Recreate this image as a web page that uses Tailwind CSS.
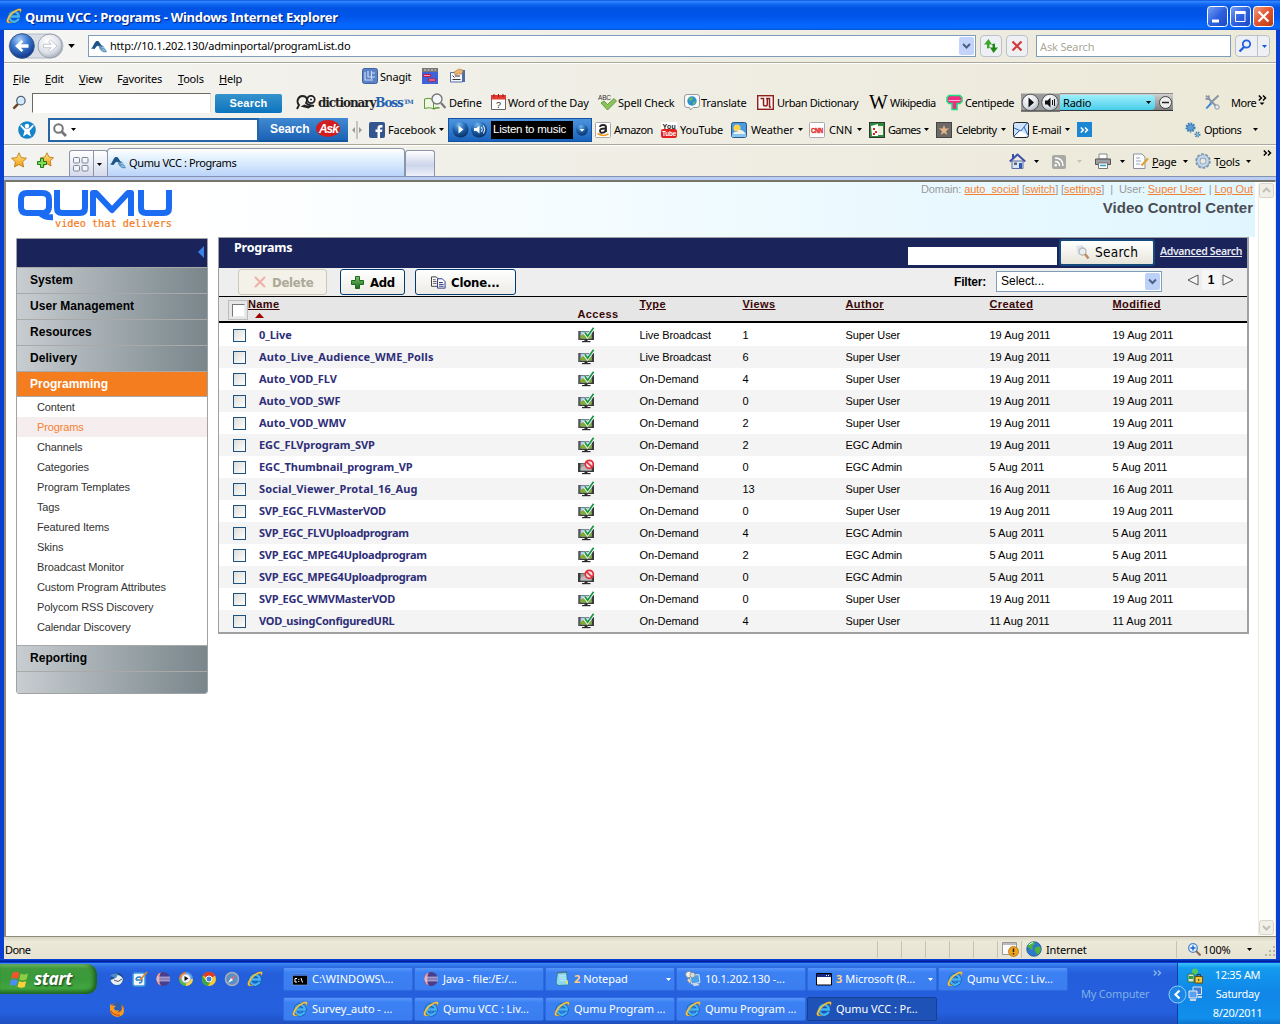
<!DOCTYPE html>
<html lang="en">
<head>
<meta charset="utf-8">
<title>Qumu VCC : Programs</title>
<script src="https://cdn.jsdelivr.net/npm/@tailwindcss/browser@4"></script>
</head>
<body class="h-[1024px] w-[1280px] overflow-hidden bg-[#245edb] font-['Noto_Sans',sans-serif] text-[11px] leading-none tracking-[-0.2px] text-black">
<svg class="absolute size-0" xmlns="http://www.w3.org/2000/svg">
  <defs>
    <radialGradient id="gBlue" cx=".4" cy=".25" r=".8"><stop offset="0" stop-color="#a9cdf7"/><stop offset=".45" stop-color="#3a78cf"/><stop offset="1" stop-color="#0b2d80"/></radialGradient>
    <radialGradient id="gGrey" cx=".4" cy=".3" r=".8"><stop offset="0" stop-color="#fff"/><stop offset=".6" stop-color="#dde1e8"/><stop offset="1" stop-color="#98a0ae"/></radialGradient>
    <radialGradient id="gOrb" cx=".4" cy=".2" r=".9"><stop offset="0" stop-color="#6fb4ee"/><stop offset=".5" stop-color="#1b5ea9"/><stop offset="1" stop-color="#07264f"/></radialGradient>
    <linearGradient id="gGreen" x1="0" y1="0" x2="0" y2="1"><stop offset="0" stop-color="#7cc36c"/><stop offset="1" stop-color="#1a6b1a"/></linearGradient>
    <linearGradient id="gStar" x1="0" y1="0" x2="0" y2="1"><stop offset="0" stop-color="#ffe98a"/><stop offset="1" stop-color="#f29a0c"/></linearGradient>
    <linearGradient id="gMin" x1="0" y1="0" x2="1" y2="1"><stop offset="0" stop-color="#7ba2f4"/><stop offset=".5" stop-color="#2f62e0"/><stop offset="1" stop-color="#1a47c4"/></linearGradient>
    <linearGradient id="gClose" x1="0" y1="0" x2="1" y2="1"><stop offset="0" stop-color="#f2a080"/><stop offset=".5" stop-color="#e2532f"/><stop offset="1" stop-color="#b83a12"/></linearGradient>
  </defs>
  <symbol id="ie" viewBox="0 0 16 16"><path d="M12.600 10.600A4.800 4.900 0 1 1 12.900 8.500H4.500" fill="none" stroke="#0f5cae" stroke-width="3.600"/><path d="M12.600 10.600A4.800 4.900 0 1 1 12.900 8.500H4.500" fill="none" stroke="#45b4f6" stroke-width="2.300"/><path d="M15 1.200C13.300.1 9.800 1.400 6.300 4.200 2.200 7.600-.2 12 1.100 14.200c.9 1.200 3 .9 5-.2-1.700.3-3 .2-3.400-.8-.6-1.700 1.200-4.900 4.500-7.700C10.200 2.900 13 1.800 13.900 2.800c.5.500.3 1.400-.1 2.300 1.300-1.600 2-3.200 1.200-3.900z" fill="#fbd04a" stroke="#c98710" stroke-width=".4"/></symbol>
  <symbol id="mount" viewBox="0 0 16 16"><path d="M0 10.500C2 10 3 5 5 3.500c2-1.500 3.500.5 5 3.500 1.500 0 3 1.500 3.500 3 1 1 1.500 2 2.500 4-2 .6-4.700.3-6-1.500-1.500-1-2-3-2.500-4.500C6 7 5 9 3.500 11 2 10.500 1.200 10.600 0 10.500z" fill="#5b93c2"/><path d="M0 10.500C2 10 3 5 5 3.500c2-1.500 3.500.5 5 3.500l1 2c-1-1-2.500-1.500-3.500-1C6 7 5 9 3.500 11 2 10.500 1.200 10.600 0 10.500z" fill="#1f5585"/><path d="M10.500 10c1-1 2-.5 3 .5M11 12.300c1-.6 2-.4 3.200.4" stroke="#b9d8ee" fill="none"/></symbol>
  <symbol id="glass" viewBox="0 0 16 16"><path d="M1.500 14.500l5-5" stroke="#6b4420" stroke-width="2.600"/><circle cx="9.500" cy="6" r="4.500" fill="#cfe9fb" stroke="#4c5f78" stroke-width="1.300"/><path d="M7 5c.5-1.500 1.500-2 3-2" stroke="#fff" fill="none"/></symbol>
  <symbol id="star" viewBox="0 0 16 16"><path d="M8 .8l2.200 4.800 5.300.6-3.900 3.600 1 5.200L8 12.500 3.400 15l1-5.200L.5 6.200l5.300-.6z" fill="url(#gStar)" stroke="#b8720c" stroke-width=".8"/></symbol>
  <symbol id="starplus" viewBox="0 0 17 17"><path d="M10 .8l2 4.300 4.500.6-3.300 3.300.8 5L10 11.700 6 14l.7-5L3.500 5.700 8 5z" fill="url(#gStar)" stroke="#b8720c" stroke-width=".8"/><path d="M3.500 6.500h3v3h3v3h-3v3h-3v-3h-3v-3h3z" fill="#7ddb58" stroke="#217a17"/></symbol>
  <symbol id="eclipse" viewBox="0 0 16 16"><circle cx="8" cy="8" r="7" fill="#4a3d8c"/><path d="M1.500 5.500A7 7 0 0 1 6 1.300C4 4 3.500 11 6 14.700A7 7 0 0 1 1.500 10z" fill="#e89a9a"/><path d="M2 6.200h13M1 8h14M2 9.800h13" stroke="#d8d4f2" stroke-width=".9"/></symbol>
  <symbol id="notepad" viewBox="0 0 16 16"><path d="M3.500 1.500l9-.5 1.500 13-10 .5L2 12z" fill="#8fd7ef" stroke="#237a96" stroke-width=".8"/><path d="M5 5l6.500-.3M5.300 7.300l6.500-.3M5.500 9.600l6.500-.3" stroke="#c9f0fb" stroke-width=".8"/><path d="M3.500 1.800l9-.5" stroke="#555" stroke-dasharray="1 1" stroke-width="1.500"/><path d="M14 14l-3-3 3-2z" fill="#d7e76b"/></symbol>
  <symbol id="remote" viewBox="0 0 16 16"><path d="M5 4.500l9-1 1 8-8.500 1.500z" fill="#4ba3ee" stroke="#d8e5f4"/><path d="M8 13l5-.8 1.500 2-6 1z" fill="#cfd8e2"/><circle cx="3.800" cy="3.500" r="3.100" fill="#f4f1e8" stroke="#777" stroke-width=".6"/><circle cx="7.500" cy="4" r="2.600" fill="#dedbd0" stroke="#777" stroke-width=".6"/><path d="M2 9l2-2 2.500 3-2 2.500z" fill="#ded9c5" stroke="#777" stroke-width=".5"/></symbol>
  <symbol id="console" viewBox="0 0 16 16"><path d="M.5 3h15v11H.5z" fill="#000" stroke="#8da4cb" stroke-width=".6"/><path d="M1 3h14v2H1z" fill="#3b6dcc"/><path d="M5 7.500H3v3.500h2M9 7l1.500 4.500M6.800 8v1M6.800 10v1" stroke="#fff" fill="none"/></symbol>
  <symbol id="app" viewBox="0 0 16 16"><path d="M.5 2.500h15v11.500H.5z" fill="#fff" stroke="#000"/><path d="M1 3h14v3H1z" fill="#182a88"/><path d="M10 4.500h1M12 4.500h1" stroke="#fff"/></symbol>
  <symbol id="check" viewBox="0 0 17 16"><path d="M0 4h16v9H0z" fill="#3b3b3b"/><path d="M2.500 4.500h11v7h-11z" fill="#b6cbf0"/><path d="M2.500 9c3-2.500 6-2.500 11-.5v3h-11z" fill="#7fae2c"/><path d="M0 4h1.500v9H0z" fill="#777"/><path d="M4 14h8.500v1.200H4z" fill="#2b2b2b"/><path d="M6.500 13h3v1.200h-3z" fill="#2b2b2b"/><path d="M6.500 5.500l3 4 6.300-8.300" fill="none" stroke="#fff" stroke-width="3"/><path d="M6.800 5.300l2.800 4 6-8.500" fill="none" stroke="#169440" stroke-width="1.700"/></symbol>
  <symbol id="deny" viewBox="0 0 17 16"><path d="M0 4h16v9H0z" fill="#3b3b3b"/><path d="M2.500 4.500h11v7h-11z" fill="#9c9c9c"/><path d="M2.500 9c3-2.500 6-2.500 11-.5v3h-11z" fill="#bbb"/><path d="M4 14h8.500v1.200H4z" fill="#2b2b2b"/><path d="M6.500 13h3v1.200h-3z" fill="#2b2b2b"/><circle cx="11.300" cy="5.300" r="4" fill="#f6dcdc" stroke="#e0303c" stroke-width="1.700"/><path d="M8.500 2.800l5.500 5" stroke="#e0303c" stroke-width="1.600"/></symbol>
  <symbol id="gear" viewBox="0 0 16 16"><circle cx="8" cy="8" r="6.800" fill="none" stroke="#7c96b4" stroke-width="2" stroke-dasharray="2.700 1.570"/><circle cx="8" cy="8" r="4.600" fill="none" stroke="#7c96b4" stroke-width="4"/><circle cx="8" cy="8" r="4.600" fill="none" stroke="#c2d6ea" stroke-width="2.600"/></symbol>
  <symbol id="caret" viewBox="0 0 5 3"><path d="M0 0h5L2.500 3z" fill="currentColor"/></symbol>
  <symbol id="more" viewBox="0 0 9 6"><path d="M.8.500l2.500 2.500L.8 5.500M5 .5l2.500 2.500L5 5.500" fill="none" stroke="currentColor" stroke-width="1.500"/></symbol>
  <symbol id="globe" viewBox="0 0 16 16"><circle cx="8" cy="8" r="7.300" fill="#2c79cb" stroke="#174a85" stroke-width=".7"/><path d="M2 4c2-3 5-3.300 7-2.500L8 4 6 5l1 2-2 2-1-2-2.500-1zM9 7l4-2 2 3-1.500 4L11 14l-1-3-1.500-2z" fill="#4fb33c"/><path d="M3 4c1-1.500 3-2.300 4-2.300" stroke="#dff" fill="none"/></symbol>
</svg>

<div class="flex h-[963px] flex-col bg-[#0a3fd4]">
  <!-- title bar -->
  <div class="flex h-[30px] shrink-0 items-center bg-[linear-gradient(180deg,#0a4fd8_0,#2f86ff_5%,#1268f3_14%,#0054e3_26%,#0055ea_55%,#0564fb_78%,#0468ff_92%,#0556d8_100%)] pr-[6px] pl-[6px]">
    <svg class="mt-[2px] size-4"><use href="#ie"/></svg>
    <span class="mt-[3px] ml-[3px] grow text-[13px] leading-4 font-bold tracking-[-0.28px] text-white [text-shadow:1px_1px_1px_#05217c]">Qumu VCC : Programs - Windows Internet Explorer</span>
    <div class="mt-[3px] flex gap-[2px]">
      <svg class="h-[21px] w-[21px]" viewBox="0 0 21 21"><rect x=".5" y=".5" width="20" height="20" rx="3" fill="url(#gMin)" stroke="#fff"/><path d="M5 13.500h7v3H5z" fill="#fff"/></svg>
      <svg class="h-[21px] w-[21px]" viewBox="0 0 21 21"><rect x=".5" y=".5" width="20" height="20" rx="3" fill="url(#gMin)" stroke="#fff"/><path d="M5.500 6v9.500h9.500V6z" fill="none" stroke="#fff"/><path d="M5 5h10.500v3H5z" fill="#fff"/></svg>
      <svg class="h-[21px] w-[21px]" viewBox="0 0 21 21"><rect x=".5" y=".5" width="20" height="20" rx="3" fill="url(#gClose)" stroke="#fff"/><path d="M5.500 5.500l10 10M15.500 5.500l-10 10" stroke="#fff" stroke-width="2.200"/></svg>
    </div>
  </div>

  <div class="mr-1 ml-1 flex h-[930px] shrink-0 flex-col bg-[#ece9d8]">
    <!-- address row -->
    <div class="flex h-[33px] shrink-0 items-center border-b border-[#aca899] bg-linear-to-r from-[#f5f5f4] to-[#ece9d8] pl-[4px]">
      <svg class="h-7 w-[56px] shrink-0" viewBox="0 0 56 28"><rect x="1" y="2" width="54" height="24" rx="12" fill="#d9dde5" stroke="#b4bbc6"/><circle cx="14" cy="14" r="12.300" fill="url(#gBlue)" stroke="#35588f"/><circle cx="42" cy="14" r="12" fill="url(#gGrey)" stroke="#9aa2b0"/><path d="M7 14l6.500-6 1.800 1.800-2.500 2.500h7.700v3.400h-7.700l2.500 2.500-1.800 1.800z" fill="#fff"/><path d="M49 14l-6.500-6-1.800 1.800 2.500 2.500h-7.700v3.400h7.700l-2.500 2.500 1.800 1.800z" fill="#fff" stroke="#b4bac5" stroke-width=".8"/></svg>
      <svg class="ml-[4px] h-1 w-[7px]"><use href="#caret"/></svg>
      <div class="ml-[13px] flex h-[22px] w-[888px] shrink-0 items-center border border-[#7f9db9] bg-white pr-px pl-[2px]">
        <svg class="size-4"><use href="#mount"/></svg>
        <span class="ml-[3px] grow pb-px text-[11px]">http://10.1.202.130/adminportal/programList.do</span>
        <svg class="h-[18px] w-[15px]" viewBox="0 0 15 18"><rect width="15" height="18" rx="2" fill="#c3d3fb"/><path d="M4 7l3.500 3.500L11 7" fill="none" stroke="#4d6185" stroke-width="2"/></svg>
      </div>
      <div class="ml-1 flex h-[22px] w-[22px] items-center justify-center rounded-sm border border-[#b9c2cc] bg-[#eef0f3]"><svg class="size-4" viewBox="0 0 16 16"><path d="M4 10.500V6.500H1L5.500 1l3.500 5.500H6.500q-.5 2 .5 3.500z" fill="#3fa62c"/><path d="M12 5.500v4h3L10.500 15 7 9.500h2.500q.5-2-.5-3.500z" fill="#1f8a18"/></svg></div>
      <div class="ml-1 flex h-[22px] w-[22px] items-center justify-center rounded-sm border border-[#b9c2cc] bg-[#eef0f3]"><svg class="size-[14px]" viewBox="0 0 14 14"><path d="M2.500 2.500l9 9M11.500 2.500l-9 9" stroke="#d23a3a" stroke-width="2.200"/></svg></div>
      <div class="ml-2 flex h-[22px] w-[195px] items-center border border-[#7f9db9] bg-white pl-[3px] text-[#aca899] tracking-[-0.15px]">Ask Search</div>
      <div class="ml-1 flex h-[22px] w-[35px] items-center rounded-sm border border-[#b9c2cc] bg-[#eef0f3]"><svg class="mx-[2px] size-[14px]" viewBox="0 0 14 14"><circle cx="8.500" cy="5" r="3.700" fill="none" stroke="#1f62e0" stroke-width="1.800"/><path d="M6 8l-4.500 4.500" stroke="#1f62e0" stroke-width="2.400"/></svg><div class="ml-[3px] h-5 w-px bg-[#b9c2cc]"></div><svg class="ml-[4px] h-[3px] w-[5px] text-[#1257e8]"><use href="#caret"/></svg></div>
    </div>

    <!-- menus and search toolbars -->
    <div class="flex h-[82px] shrink-0 flex-col border-t border-b border-t-white border-b-[#aca899] bg-linear-to-r from-[#f3f3f1] to-[#ece9d8] whitespace-nowrap">
      <div class="flex h-[24px] items-center pl-[9px]">
        <div class="mt-[4px] flex w-[349px]">
          <span class="w-8"><u>F</u>ile</span><span class="w-[34px]"><u>E</u>dit</span><span class="w-[38px]"><u>V</u>iew</span><span class="w-[61px]">F<u>a</u>vorites</span><span class="w-[41px]"><u>T</u>ools</span><span><u>H</u>elp</span>
        </div>
        <svg class="size-4" viewBox="0 0 16 16"><rect x=".5" y=".5" width="15" height="15" rx="2" fill="#5a82c4" stroke="#3c62a4"/><path d="M3 4v8h8M6 3v6h7M9 5h4M9.500 3v8" stroke="#c9dcf6" fill="none" stroke-width="1.200"/></svg>
        <span class="ml-[2px] w-[42px]">Snagit</span>
        <svg class="size-4" viewBox="0 0 16 16"><path d="M0 0h16v16H0z" fill="#3f62d8"/><path d="M0 0h16v4H0z" fill="#777"/><path d="M2 2h12" stroke="#ddd" stroke-dasharray="2 1.500"/><path d="M1.500 6.500h7v2h-7zM6.500 11h7v2h-7z" fill="#f6a0c8" stroke="#c4153b"/></svg>
        <svg class="ml-3 size-4" viewBox="0 0 16 16"><path d="M.5 4.500h12v9.500H.5z" fill="#f4f4fa" stroke="#5273a8"/><path d="M2.500 7.500l2 2M5 8h5M2.500 11.500h8" stroke="#333" fill="none"/><path d="M4 4l5-3 4 1-1 4-4 0-3 1z" fill="#eab26c" stroke="#a06a26" stroke-width=".5"/><path d="M14 2v12" stroke="#234a96" stroke-width="1.600"/></svg>
      </div>
      <div class="flex h-[28px] items-center pl-2">
        <svg class="size-[15px]"><use href="#glass"/></svg>
        <div class="mt-px ml-[5px] h-[20px] w-[179px] border border-t-[#6d6a5f] border-r-[#e4e1d3] border-b-white border-l-[#6d6a5f] bg-white"></div>
        <div class="mt-[2px] ml-1 flex h-[19px] w-[67px] items-center justify-center rounded-[2px] bg-linear-to-b from-[#3492cc] to-[#0874bd] font-['Liberation_Sans',Arial,sans-serif] font-bold tracking-[0.25px] text-white">Search</div>
        <svg class="ml-[14px] h-[15px] w-[20px]" viewBox="0 0 20 15"><path d="M1 14l2-4c-3-3-1-9 3.500-9S12 5 10 8c2 3 5 2 8 3" fill="none" stroke="#222" stroke-width="1.900"/><circle cx="15" cy="4.500" r="3.700" fill="#fff" stroke="#222" stroke-width="1.800"/><circle cx="15" cy="4.500" r="1" fill="#222"/><path d="M4.500 11.500l4-2 4 1.500 4 0-4 2.500-4-1z" fill="#222"/></svg>
        <span class="mt-px ml-[2px] w-[106px] font-['DejaVu_Serif',serif] text-[12px] font-bold tracking-[-1.080px] text-[#222]">dictionary<span class="text-[#2360b4]">Boss</span><sup class="text-[6px] text-[#2360b4]"> TM</sup></span>
        <svg class="h-[18px] w-[22px]" viewBox="0 0 22 18"><path d="M.5 6v9.500c4-1 6-1 9 .5V7C6 5 4 5 .5 6z" fill="#eef6e4" stroke="#5f9a30"/><path d="M9.500 16c3-1.500 4-1.500 6-1" stroke="#5f9a30" stroke-width="1.500" fill="none"/><circle cx="13" cy="6" r="5" fill="#f5f8fb" stroke="#777" stroke-width="1.400"/><path d="M17 10l4.500 5" stroke="#777" stroke-width="2.200"/></svg>
        <span class="ml-[3px] w-[42px]">Define</span>
        <svg class="h-4 w-[15px]" viewBox="0 0 15 16"><path d="M.5 1.500h14v14H.5z" fill="#fff" stroke="#666"/><path d="M0 1h15v4.500H0z" fill="#e23a30"/><path d="M3 0v3M7.500 0v3M12 0v3" stroke="#8e1c16"/><text x="5" y="14" font-size="9" fill="#222" font-family="Liberation Sans">?</text></svg>
        <span class="ml-[2px] w-[90px]">Word of the Day</span>
        <svg class="h-[17px] w-[20px]" viewBox="0 0 20 17"><text x="0" y="5.500" font-size="6.500" fill="#333" font-family="Liberation Sans">ABC</text><path d="M3 9l3-2 3.500 3.500L16 4.500 18.500 7l-9 9z" fill="#8bc35a" stroke="#4f8f2b" stroke-width=".8"/></svg>
        <span class="w-[66px]">Spell Check</span>
        <svg class="h-[17px] w-4" viewBox="0 0 16 17"><path d="M3 .5h10q2.500 0 2.500 2.500v8q0 2.500-2.500 2.500H9L6.500 16l-1-2.500H3Q.5 13.500.5 11V3Q.5.500 3 .5z" fill="#fafafa" stroke="#999"/><circle cx="8" cy="7" r="4.700" fill="#2f8fd3"/><path d="M5 4l3-1 1 2-2 2-2-1zM9 8l2.500-1-.5 3-2 1z" fill="#5bbf5d"/></svg>
        <span class="ml-[1px] w-[56px]">Translate</span>
        <svg class="h-[15px] w-[17px]" viewBox="0 0 17 15"><rect x=".7" y=".7" width="15.600" height="13.600" fill="#fdf6f2" stroke="#8e1f1f" stroke-width="1.400"/><path d="M3.500 3.500h3v6q0 1.500 2 1.500 1.800 0 1.800-1.500v-6h2.200v8.500M9 3.500h3.500M12 12h2" fill="none" stroke="#8e1f1f" stroke-width="1.500"/></svg>
        <span class="ml-[3px] w-[92px] tracking-[-0.42px]">Urban Dictionary</span>
        <span class="w-[22px] font-['Liberation_Serif',serif] text-[20px] tracking-[0]">W</span>
        <span class="-ml-px w-[56px] tracking-[-0.55px]">Wikipedia</span>
        <svg class="h-[17px] w-[17px]" viewBox="0 0 17 17"><path d="M3 1.500h11l2 2v4l-2 2h-3v6H6v-6H3l-2-2v-4z" fill="#f32a83" stroke="#1be07e" stroke-width="1.500"/><path d="M2.500 6.500h12" stroke="#ffb0d4"/></svg>
        <span class="ml-[2px] w-[56px] tracking-[-0.4px]">Centipede</span>
        <svg class="h-[19px] w-[39px]" viewBox="0 0 39 19"><path d="M0 .5h39v18H0z" fill="#9a9a9a"/><path d="M0 18h39" stroke="#333"/><circle cx="9.500" cy="9.500" r="8.300" fill="url(#gGrey)" stroke="#555"/><circle cx="29" cy="9.500" r="8.300" fill="url(#gGrey)" stroke="#555"/><path d="M7.500 4.500v10l5.500-5z" fill="#111"/><path d="M24 7.500h2.500l3-3v10l-3-3H24z" fill="#111"/><path d="M31.500 7v5M33.500 6v7" stroke="#111"/></svg>
        <div class="flex h-[18px] w-[113px] items-center border-t border-b border-t-[#8d8d8d] border-b-[#333] bg-linear-to-b from-[#d0d0d0] to-[#7f7f7f]"><div class="flex h-[15px] w-[95px] items-center rounded-r-[4px] bg-linear-to-b from-[#9cf0fb] to-[#44cdea] pr-1 pl-[3px]"><span class="grow">Radio</span><svg class="h-[3px] w-[5px]"><use href="#caret"/></svg></div><svg class="ml-[4px] size-[13px]" viewBox="0 0 13 13"><circle cx="6.500" cy="6.500" r="6" fill="#eee" stroke="#444"/><path d="M3 6.500h7" stroke="#222" stroke-width="1.500"/></svg></div>
        <svg class="ml-[31px] size-4" viewBox="0 0 16 16"><path d="M14.500 1.500l-8.500 8" stroke="#8694a4" stroke-width="2"/><path d="M6.500 8.500l-5 5.500 1.500 1 5-5z" fill="#3d87d6"/><path d="M2 1.500l1.500 2M1.500 4.500c3 2 4-1 3-3M5 5l7 7" stroke="#8694a4" stroke-width="1.800" fill="none"/><circle cx="13" cy="13" r="2.200" fill="#e7ecf2" stroke="#8694a4"/></svg>
        <span class="ml-[11px] w-[27px] tracking-[-0.5px]">More</span>
        <svg class="mb-[3px] h-[12px] w-[9px]" viewBox="0 0 9 12"><path d="M.8.500l2.500 2.500L.8 5.500M5 .5l2.500 2.500L5 5.500" fill="none" stroke="#000" stroke-width="1.500"/><path d="M1.500 7.500h5L4 10z"/></svg>
      </div>
      <div class="flex h-[27px] items-center pl-[14px]">
        <svg class="size-[18px]" viewBox="0 0 18 18"><circle cx="9" cy="9" r="8.800" fill="#1684cb"/><circle cx="9" cy="5" r="2.300" fill="#fff"/><path d="M3 3.500l4 4h4l4-4 .8 1.500-4.300 5 1.500 5.500-4-2.500-4 2.500 1.500-5.500L2.200 5z" fill="#fff"/></svg>
        <div class="ml-3 flex h-[24px] w-[211px] items-center border-2 border-[#2565a5] bg-white pl-[3px]"><svg class="size-[14px]" viewBox="0 0 14 14"><circle cx="5.500" cy="5.500" r="4.300" fill="none" stroke="#777" stroke-width="2"/><path d="M8.500 8.500l4.500 4.500" stroke="#777" stroke-width="2.800"/></svg><svg class="ml-[4px] h-[3px] w-[5px]"><use href="#caret"/></svg></div>
        <div class="flex h-[24px] w-[89px] items-center border-b-2 border-[#14579c] bg-linear-to-b from-[#4089d2] to-[#1c62b5] pl-[11px] font-['Liberation_Sans',Arial,sans-serif] text-[12px] font-bold tracking-[-0.1px] text-white">Search<span class="ml-[7px] flex h-[17px] w-[24px] items-center justify-center rounded-[50%] bg-[#d41c1f] text-[12px] italic tracking-[-1px]">Ask</span></div>
        <svg class="ml-[4px] h-[18px] w-[10px]" viewBox="0 0 10 18"><path d="M5 0v18" stroke="#999"/><path d="M0 9l3-3v6zM10 9L7 6v6z" fill="#999"/></svg>
        <svg class="ml-[7px] size-4" viewBox="0 0 16 16"><rect width="16" height="16" rx="2" fill="#35558f"/><path d="M8.500 16V10H6.500V7.500h2V6q0-3 3-3h2v2.500h-1.300q-1.200 0-1.200 1v1h2.400L13 10h-2v6z" fill="#fff"/></svg>
        <span class="ml-[3px] w-[51px]">Facebook</span><svg class="h-[3px] w-[5px]"><use href="#caret"/></svg>
        <div class="ml-[4px] flex h-[24px] w-[144px] items-center border border-[#1553a0] bg-linear-to-b from-[#4c94de] to-[#1762bd] pl-[3px]">
          <svg class="h-[17px] w-[36px]" viewBox="0 0 36 17"><circle cx="8.500" cy="8.500" r="8" fill="url(#gOrb)"/><circle cx="27" cy="8.500" r="8" fill="url(#gOrb)"/><path d="M6.500 4.500v8l5-4z" fill="#fff"/><path d="M22 7h2.500l3-2.500v8l-3-2.500H22z" fill="#fff"/><path d="M29.500 6q1.500 2.500 0 5M31.500 4.500q2.500 4 0 8" fill="none" stroke="#fff"/></svg>
          <div class="ml-[3px] flex h-[18px] w-[82px] items-center bg-black pl-[2px] font-['Liberation_Sans',Arial,sans-serif] text-[11.500px] tracking-[-0.25px] text-white">Listen to music</div>
          <svg class="ml-[3px] size-3" viewBox="0 0 12 12"><circle cx="6" cy="6" r="5.800" fill="url(#gOrb)"/><path d="M3.500 5h5L6 7.800z" fill="#fff"/></svg>
        </div>
        <svg class="ml-[3px] size-4" viewBox="0 0 16 16"><rect x=".5" y=".5" width="15" height="15" rx="1" fill="#fff" stroke="#aaa"/><path d="M5 5q0-2 3-2t3 2v5M10.500 6.500Q5 6.300 5 8.700t2.800 2 2.700-3" fill="none" stroke="#222" stroke-width="1.800"/><path d="M2.500 11.500q5.500 3.500 11 .5" fill="none" stroke="#f29a1b" stroke-width="1.500"/></svg>
        <span class="ml-[3px] w-[47px] tracking-[-0.55px]">Amazon</span>
        <svg class="size-4" viewBox="0 0 16 16"><path d="M0 0h16v16H0z" fill="#fff"/><rect y="7" width="16" height="9" rx="2" fill="#e3211f"/><text x="1.500" y="6.500" font-size="7" font-weight="bold" fill="#222" textLength="13" font-family="Liberation Sans">You</text><text x="1" y="14" font-size="7" font-weight="bold" fill="#fff" textLength="14" lengthAdjust="spacingAndGlyphs" font-family="Liberation Sans">Tube</text></svg>
        <span class="ml-[3px] w-[51px]">YouTube</span>
        <svg class="size-4" viewBox="0 0 16 16"><rect x=".5" y=".5" width="15" height="15" rx="2" fill="#4a9be0" stroke="#2c5588"/><circle cx="6" cy="6" r="3.500" fill="#ffd34e"/><path d="M2 13q0-4 4-3 1-3 4-2t3 2q2 .5 1.500 3z" fill="#f0f0e8"/><path d="M1 12h14v3H1z" fill="#86c6f2"/></svg>
        <span class="ml-[4px] w-[47px]">Weather</span><svg class="h-[3px] w-[5px]"><use href="#caret"/></svg>
        <svg class="ml-[6px] size-4" viewBox="0 0 16 16"><rect x=".5" y=".5" width="15" height="15" rx="1" fill="#fff" stroke="#aaa"/><text x="2" y="10.500" font-size="7" font-weight="bold" fill="#e02020" stroke="#e02020" stroke-width=".3" textLength="12" lengthAdjust="spacingAndGlyphs" font-family="Liberation Sans">CNN</text></svg>
        <span class="ml-[4px] w-[28px]">CNN</span><svg class="h-[3px] w-[5px]"><use href="#caret"/></svg>
        <svg class="ml-[7px] size-4" viewBox="0 0 16 16"><rect x=".5" y=".5" width="15" height="15" fill="#2c8a3a" stroke="#333"/><path d="M2 4l7-2v12H3z" fill="#fff"/><path d="M9 4h5v9H9z" fill="#f4f0e4"/><path d="M4 6h2v2H4zM6 9h2v2H6zM4 11h2v2H4z" fill="#d22"/></svg>
        <span class="ml-[3px] w-[36px] tracking-[-0.7px]">Games</span><svg class="h-[3px] w-[5px]"><use href="#caret"/></svg>
        <svg class="ml-[7px] size-4" viewBox="0 0 16 16"><rect x=".5" y=".5" width="15" height="15" fill="#6d6966" stroke="#444"/><path d="M8 3l1.300 3.500h4L10 9l1.300 4L8 10.700 4.700 13 6 9 2.700 6.500h4z" fill="#e6b48a"/></svg>
        <span class="ml-[4px] w-[45px] tracking-[-0.6px]">Celebrity</span><svg class="h-[3px] w-[5px]"><use href="#caret"/></svg>
        <svg class="ml-[7px] size-4" viewBox="0 0 16 16"><rect x=".5" y=".5" width="15" height="15" rx="2" fill="#cfe3fa" stroke="#222"/><path d="M1 6l7 3 6-8M1 14l5-5M11 5l4 8" stroke="#2c62b5" fill="none"/><path d="M2 14L8 9l6 4-3 2H4z" fill="#fff"/></svg>
        <span class="ml-[3px] w-[33px] tracking-[-0.45px]">E-mail</span><svg class="h-[3px] w-[5px]"><use href="#caret"/></svg>
        <div class="ml-[7px] flex size-[15px] items-center justify-center bg-[#1b86d3] text-white"><svg class="h-[6px] w-[9px]"><use href="#more"/></svg></div>
        <svg class="ml-[93px] size-4" viewBox="0 0 16 16"><circle cx="5.500" cy="5.500" r="3.800" fill="#5c9bd2" stroke="#3c7cb8" stroke-width="2.500" stroke-dasharray="1.500 1"/><circle cx="12.500" cy="12.500" r="2" fill="#9cc" stroke="#3c7cb8" stroke-width="2" stroke-dasharray="1 .8"/></svg>
        <span class="ml-[3px] w-[49px] tracking-[-0.5px]">Options</span><svg class="h-[3px] w-[5px]"><use href="#caret"/></svg>
      </div>
    </div>

    <!-- tab row -->
    <div class="flex h-[31px] shrink-0 border-t border-white bg-linear-to-r from-[#f3f3f1] to-[#ece9d8] pl-[7px]">
      <svg class="mt-[6px] size-4"><use href="#star"/></svg>
      <svg class="mt-[6px] ml-[10px] size-[17px]"><use href="#starplus"/></svg>
      <div class="mt-1 ml-[15px] flex h-[27px] w-[39px] rounded-t-[3px] border border-b-0 border-[#8b94a9] bg-linear-to-b from-white to-[#d3d9ea]">
        <svg class="mt-[6px] ml-[3px] size-4" viewBox="0 0 16 16"><g fill="#f3f5fa" stroke="#7d8595"><rect x=".5" y=".5" width="6" height="5.500" rx="1"/><rect x="9" y=".5" width="6" height="5.500" rx="1"/><rect x=".5" y="8.500" width="6" height="5.500" rx="1"/><rect x="9" y="8.500" width="6" height="5.500" rx="1"/></g></svg>
        <div class="ml-[4px] w-px bg-[#8b94a9]"></div><svg class="mt-3 ml-[3px] h-[3px] w-[5px]"><use href="#caret"/></svg>
      </div>
      <div class="mt-[2px] -ml-px flex h-[29px] w-[298px] items-center rounded-t-[4px] border border-b-0 border-[#8b94a9] bg-linear-to-b from-white via-[#dfeffd] via-40% to-[#b8d2f9] pb-[2px] pl-[2px]"><svg class="size-4"><use href="#mount"/></svg><span class="ml-[3px] tracking-[-0.38px]">Qumu VCC : Programs</span></div>
      <div class="mt-1 h-[27px] w-[30px] rounded-t-[3px] border border-b-0 border-[#8b94a9] bg-linear-to-b from-white via-[#cdd5ea] via-55% to-[#f1f4fb]"></div>
      <div class="mt-[6px] ml-[574px] flex h-[18px] items-center">
        <svg class="h-4 w-[17px]" viewBox="0 0 17 16"><path d="M3 8h11v7.500H3z" fill="#dfe6f3" stroke="#5b6da0"/><path d="M.8 8.500L8.500 1.500l7.700 7" fill="none" stroke="#3c4fa8" stroke-width="2"/><path d="M3 1h2v4H3z" fill="#3c4fa8"/><path d="M5 9.500h3v2.500H5z" fill="#567"/><path d="M10 10h3v5h-3z" fill="#2c58b8"/></svg>
        <svg class="ml-[8px] h-[3px] w-[5px]"><use href="#caret"/></svg>
        <svg class="ml-[13px] mt-[2px] size-[14px]" viewBox="0 0 14 14"><rect width="14" height="14" rx="2" fill="#a9a9a4"/><circle cx="3.700" cy="10.300" r="1.300" fill="#fff"/><path d="M3 6.500q4.500 0 4.500 4.500M3 3q8 0 8 8" fill="none" stroke="#fff" stroke-width="1.500"/></svg>
        <svg class="ml-[11px] h-[3px] w-[5px] text-[#c5c2b4]"><use href="#caret"/></svg>
        <svg class="ml-[13px] h-4 w-[16px]" viewBox="0 0 16 16"><path d="M4 1h8v5H4z" fill="#fff" stroke="#888"/><path d="M.5 6h15v5.500H.5z" fill="#9a9da2" stroke="#555"/><path d="M3.500 10h9v5.500h-9z" fill="#fff" stroke="#777"/><path d="M5 12.500h6" stroke="#2fa0c0" stroke-width="1.500"/></svg>
        <svg class="ml-[9px] h-[3px] w-[5px]"><use href="#caret"/></svg>
        <svg class="ml-[8px] size-4" viewBox="0 0 16 16"><path d="M.5 1h8.500l3 3v11.500H.5z" fill="#fdfdfd" stroke="#8a90a0"/><path d="M3 5h4M3 8h5M3 11h4" stroke="#98a4c0"/><path d="M15 5.500l-6.500 7" stroke="#e0a030" stroke-width="2"/></svg>
        <span class="ml-[3px] w-[31px] tracking-[-0.4px]"><u>P</u>age</span><svg class="h-[3px] w-[5px]"><use href="#caret"/></svg>
        <svg class="ml-[7px] size-4"><use href="#gear"/></svg>
        <span class="ml-[3px] w-[32px]">T<u>o</u>ols</span><svg class="h-[3px] w-[5px]"><use href="#caret"/></svg>
      </div>
      <svg class="mt-[4px] ml-[12px] h-[6px] w-[9px]"><use href="#more"/></svg>
    </div>
    <div class="h-[4px] shrink-0 border-t border-[#8792b0] bg-[#b9cdf5]"></div>

    <!-- page viewport -->
    <div class="flex h-[756px] shrink-0 border-t-2 border-r border-l-2 border-t-[#77746a] border-r-[#ece9d8] border-l-[#8d897c] bg-white">
      <div class="w-[1249px] shrink-0 font-['Liberation_Sans',Arial,sans-serif] tracking-[0]">
        <div class="flex h-[55px] justify-between bg-linear-to-r from-white from-15% to-[#e0f6ff] pr-[2px] pl-[11px]">
          <svg class="mt-[6px] h-[42px] w-[157px]" viewBox="0 0 157 42"><g fill="none" stroke="#1b6cf2" stroke-width="6"><path d="M30 25H10q-6 0-6-6v-8q0-6 6-6h15q7 0 7 6v8q0 5-5 6M23 25q4 4.500 13 4.200"/><path d="M40 2v18q0 5 5 5h18q5 0 5-5V2"/><path d="M76 28V5h3l16 17L111 5h3v23" stroke-linejoin="round"/><path d="M124 2v18q0 5 5 5h18q5 0 5-5V2"/></g><text x="38" y="39" font-family="DejaVu Sans Mono" font-size="10" textLength="117" lengthAdjust="spacingAndGlyphs" fill="#f47b20" stroke="#f47b20" stroke-width=".2">video that delivers</text></svg>
          <div class="flex flex-col items-end">
            <div class="mt-[2px] h-[12px] text-[11px] whitespace-pre tracking-[-0.08px] text-[#999]">Domain: <u class="text-[#f58232]">auto_social</u> [<u class="text-[#f58232]">switch</u>] [<u class="text-[#f58232]">settings</u>]  |  User: <u class="text-[#f58232]">Super User </u> | <u class="text-[#f58232]">Log Out</u></div>
            <div class="mt-[4px] text-[15px] font-bold tracking-[0.02px] text-[#4a4d52]">Video Control Center</div>
          </div>
        </div>
        <div class="flex items-start pl-[10px]">
          <!-- side navigation -->
          <div class="mt-px w-[192px] overflow-hidden rounded-b-[3px] border border-[#a0a2a4] text-[12px] font-bold">
            <div class="flex h-[28px] items-center justify-end bg-[#1a245b] pb-[3px] pr-[3px]"><svg class="h-3 w-[6px]" viewBox="0 0 6 12"><path d="M6 0v12L0 6z" fill="#3b82e8"/></svg></div>
            <div id="nav"></div>
          </div>
          <!-- program list -->
          <div class="ml-[10px] w-[1031px] border border-r-2 border-b-2 border-[#a0a0a0]">
            <div class="flex h-[30px] bg-[#1a245b]">
              <div class="mt-[2px] ml-[15px] w-[674px] shrink-0 font-['Noto_Sans',sans-serif] text-[12.500px] leading-4 font-bold tracking-[-0.23px] text-white">Programs</div>
              <div class="mt-[9px] h-[18px] w-[149px] shrink-0 bg-white"></div>
              <div class="mt-[1px] ml-[2px] flex h-[27px] w-[96px] shrink-0 items-center rounded-[3px] border-2 border-[#164a7d] bg-linear-to-b from-white to-[#e7e5da] pl-[14px]"><svg class="size-[15px]" viewBox="0 0 15 15"><path d="M1 1l7-1 2 8-7 2z" fill="#dfe3ea"/><circle cx="7.500" cy="6.500" r="3.500" fill="#e8eef4" stroke="#b9b9b9" stroke-width="1.300"/><path d="M10 9l3.500 4.500" stroke="#c08a62" stroke-width="2.500"/></svg><span class="ml-[5px] font-['DejaVu_Sans_Condensed','DejaVu_Sans',sans-serif] text-[13.500px] tracking-[0.25px]">Search</span></div>
              <u class="mt-[8px] ml-[5px] font-['Noto_Sans',sans-serif] text-[10.500px] font-semibold tracking-[-0.35px] whitespace-nowrap text-[#e8e8f2]">Advanced Search</u>
            </div>
            <div class="flex h-[28px] items-center bg-[#eee] font-['DejaVu_Sans_Condensed','DejaVu_Sans',sans-serif] text-[13px] font-bold">
              <div class="ml-[19px] flex h-[26px] w-[89px] items-center rounded-[3px] border border-[#cbc8b8] bg-[#f4f2e8] pl-[15px] text-[#aba999]"><svg class="size-[12px]" viewBox="0 0 12 12"><path d="M1 1l10 10M11 1L1 11" stroke="#efb3aa" stroke-width="2.200"/></svg><span class="ml-[6px] tracking-[-0.3px]">Delete</span></div>
              <div class="ml-[13px] flex h-[26px] w-[65px] items-center rounded-[3px] border border-[#003c74] bg-linear-to-b from-white to-[#ecebe5] pl-[10px]"><svg class="size-[13px]" viewBox="0 0 13 13"><path d="M4.500.5h4v4h4v4h-4v4h-4v-4h-4v-4h4z" fill="url(#gGreen)" stroke="#1e6a1e"/></svg><span class="ml-[6px] tracking-[-0.3px]">Add</span></div>
              <div class="ml-[10px] flex h-[26px] w-[101px] items-center rounded-[3px] border border-[#003c74] bg-linear-to-b from-white to-[#ecebe5] pl-[15px]"><svg class="h-[13px] w-[15px]" viewBox="0 0 16 13"><path d="M.5.500h5l2.500 2.500v7.500H.5z" fill="#fff" stroke="#333"/><path d="M2 3.500h3M2 5.500h4M2 7.500h4" stroke="#555"/><path d="M7 2.500h5l3 3v7H7z" fill="#fff" stroke="#24307c"/><path d="M8.500 6.500h4M8.500 8.500h5M8.500 10.500h5" stroke="#24307c"/></svg><span class="ml-[5px] tracking-[-0.2px]">Clone...</span></div>
              <span class="ml-[438px] w-[42px] font-['Liberation_Sans',Arial,sans-serif] text-[12px] tracking-[-0.2px]">Filter:</span>
              <div class="mb-[2px] flex h-[21px] w-[166px] items-center border border-[#7f9db9] bg-white pr-px pl-1 font-['Liberation_Sans',Arial,sans-serif] text-[12px] font-normal"><span class="grow">Select...</span><svg class="h-[17px] w-[15px]" viewBox="0 0 15 17"><rect width="15" height="17" rx="2" fill="#bdd0f7"/><path d="M4 6.500L7.500 10 11 6.500" fill="none" stroke="#4d6185" stroke-width="2"/></svg></div>
              <svg class="mb-[4px] ml-[25px] h-[12px] w-[12px]" viewBox="0 0 12 12"><path d="M11 1v10L1 6z" fill="#f6f6f6" stroke="#555"/></svg>
              <span class="mb-[4px] ml-[3px] flex h-5 w-[18px] items-center justify-center bg-[#f6f6f6] font-['Liberation_Sans',Arial,sans-serif] text-[12px]">1</span>
              <svg class="mb-[4px] ml-[2px] h-[12px] w-[12px]" viewBox="0 0 12 12"><path d="M1 1v10L11 6z" fill="#f6f6f6" stroke="#555"/></svg>
            </div>
            <div class="flex h-[27px] border-t border-b-2 border-black bg-[#e6e6e6] leading-[14px] font-bold tracking-[0.4px] text-[#3a0505]">
              <div class="mt-[3px] ml-[9px] flex size-5 items-center justify-center border border-[#bbb] bg-[#e6e6e6]"><div class="size-[13px] border border-t-[#777] border-r-[#eee] border-b-[#eee] border-l-[#777] bg-white"></div></div>
              <div class="w-[329.5px]"><u class="block">Name</u><svg class="ml-[7px] mt-[2px] h-[5px] w-[9px]" viewBox="0 0 9 5"><path d="M0 5h9L4.500 0z" fill="#a00000"/></svg></div>
              <span class="w-[62px] pt-[10px]">Access</span><u class="w-[103px]">Type</u><u class="w-[103px]">Views</u><u class="w-[144px]">Author</u><u class="w-[123px]">Created</u><u>Modified</u>
            </div>
            <div id="rows" class="pt-px"></div>
          </div>
        </div>
      </div>
      <!-- scrollbar -->
      <div class="mt-px ml-[3px] flex w-[16px] flex-col justify-between border-l border-[#eeede5] bg-[#fdfdfa]">
        <svg class="size-[15px]" viewBox="0 0 15 15"><rect x=".5" y=".5" width="14" height="14" rx="2" fill="#f1f0e8" stroke="#d6d4c8"/><path d="M4 9l3.500-3.500L11 9" fill="none" stroke="#c2c1b5" stroke-width="2"/></svg>
        <svg class="mb-[1px] size-[15px]" viewBox="0 0 15 15"><rect x=".5" y=".5" width="14" height="14" rx="2" fill="#f1f0e8" stroke="#d6d4c8"/><path d="M4 6l3.500 3.500L11 6" fill="none" stroke="#c2c1b5" stroke-width="2"/></svg>
      </div>
    </div>

    <!-- status bar -->
    <div class="flex h-[23px] shrink-0 items-center border-t border-[#8d897c] bg-linear-to-b from-[#d8d5c4] via-[#ece9d8] via-20% to-[#e6e3d2] pt-[2px] pl-px">
      <span class="w-[872px] tracking-[-0.6px]">Done</span>
      <div class="flex h-[17px]"><i class="w-[24px] border-l border-[#c5c2b2]"></i><i class="w-[24px] border-l border-[#c5c2b2]"></i><i class="w-[24px] border-l border-[#c5c2b2]"></i><i class="w-[24px] border-l border-[#c5c2b2]"></i><i class="w-[24px] border-l border-[#c5c2b2]"></i><i class="w-[5px] border-l border-[#c5c2b2]"></i></div>
      <svg class="h-4 w-[17px]" viewBox="0 0 17 16"><path d="M.5 1.500h14v12H.5z" fill="#fbfbfb" stroke="#999"/><path d="M1 2h13v2H1z" fill="#bbb"/><circle cx="11.500" cy="10.500" r="5" fill="#f0a21a" stroke="#a86b0a" stroke-width=".7"/><path d="M11.500 7.500v3.500M11.500 12v1.500" stroke="#222" stroke-width="1.500"/></svg>
      <i class="ml-[2px] h-[17px] w-[5px] border-l border-[#c5c2b2]"></i>
      <svg class="h-4 w-[16px]"><use href="#globe"/></svg>
      <span class="ml-[4px] w-[130px] tracking-[-0.2px]">Internet</span>
      <i class="h-[17px] w-[12px] border-l border-[#c5c2b2]"></i>
      <svg class="size-[13px]" viewBox="0 0 13 13"><circle cx="5" cy="5" r="4.300" fill="#e7f3ff" stroke="#4f86c4" stroke-width="1.300"/><path d="M5 2.500v5M2.500 5h5" stroke="#1c62c8" stroke-width="1.400"/><path d="M8 8l4.500 4.500" stroke="#8a6a55" stroke-width="2"/></svg>
      <span class="ml-[2px] w-[44px] tracking-[-0.1px]">100%</span>
      <svg class="h-[3px] w-[5px]"><use href="#caret"/></svg>
      <svg class="mt-[6px] ml-[12px] size-[12px]" viewBox="0 0 12 12"><path d="M9 0h2v2H9zM9 4h2v2H9zM9 8h2v2H9zM5 4h2v2H5zM5 8h2v2H5zM1 8h2v2H1z" fill="#b8b5a4"/></svg>
    </div>
    <div class="-mx-1 h-[3px] shrink-0 bg-linear-to-b from-[#0a4be0] to-[#00138c]"></div>
  </div>
</div>

<!-- taskbar -->
<div class="flex h-[61px] bg-[linear-gradient(180deg,#3f8cf3_0,#2c6ce6_6%,#245edb_18%,#2560df_80%,#1f50c0_100%)] text-white">
  <div class="mt-px flex h-[30px] w-[97px] shrink-0 items-center rounded-r-[10px] bg-[linear-gradient(180deg,#7cc06f_0,#3f9a3c_14%,#3a9a3a_50%,#41a63f_80%,#2c7a2b_100%)] pl-[10px] [box-shadow:inset_-3px_-1px_4px_#1d5c1d]">
    <svg class="h-[19px] w-[20px]" viewBox="0 0 20 19"><path d="M2.500 3q4-2.300 7 0L8 9Q5 6.800 1 9z" fill="#f0562a"/><path d="M10.700 3.500q3 2 7.300 0L16.500 9.500q-4 2-7.300 0z" fill="#8bd044"/><path d="M.8 10.300q4-2 7 0L6.200 16q-3-2-7 0z" fill="#4d8df2"/><path d="M9 11q3.500 2 7.200 0L14.700 17q-4 1.800-7.300-.3z" fill="#fbd03a"/></svg>
    <span class="ml-[4px] text-[17.500px] font-bold italic tracking-[-0.5px] [text-shadow:1px_1px_2px_#123d12]">start</span>
  </div>
  <div class="flex w-[186px] shrink-0 flex-col pl-[12px]">
    <div class="mt-[8px] flex gap-[7px]">
      <svg class="size-4" viewBox="0 0 16 16"><circle cx="8" cy="8" r="6.500" fill="#1b4f94"/><path d="M1.500 9q5-1 6.500-5 4 0 6 4-1 6-6 6-5 0-6.500-5z" fill="#e8edf4"/><path d="M1 5q4-4 8-2L7 7z" fill="#4d8cc6"/><path d="M5 9l4 1.500L13 8" stroke="#555" fill="none"/></svg>
      <svg class="size-4" viewBox="0 0 16 16"><rect x="1" y="2" width="12" height="13" rx="2" fill="#eef5fb" stroke="#3e97da" stroke-width="1.500"/><path d="M4 9q0-3 3-3t3 3-3 3M4 9h6" stroke="#2d80cc" stroke-width="1.300" fill="none"/><path d="M15 1L8 9" stroke="#e3862c" stroke-width="1.800"/></svg>
      <svg class="size-4"><use href="#eclipse"/></svg>
      <svg class="size-4" viewBox="0 0 16 16"><path d="M8 8V1a7 7 0 0 0-7 7z" fill="#f0801e"/><path d="M8 8h7a7 7 0 0 0-7-7z" fill="#4e9ff0"/><path d="M8 8v7a7 7 0 0 0 7-7z" fill="#ffd83d"/><path d="M8 8H1a7 7 0 0 0 7 7z" fill="#52b947"/><circle cx="8" cy="7.500" r="4.500" fill="#f3f6fa" stroke="#aac"/><path d="M6.500 5v5l4-2.500z" fill="#111"/></svg>
      <svg class="size-4" viewBox="0 0 16 16"><circle cx="8" cy="8" r="7" fill="#f6ca2f"/><path d="M8 8L1.800 4.500a7 7 0 0 1 12.500 0z" fill="#de3b2b"/><path d="M1.500 4.800A7 7 0 0 0 7 15l3-5.500H5z" fill="#41a447"/><circle cx="8" cy="8" r="3" fill="#3f7ee0" stroke="#fff"/></svg>
      <svg class="size-4" viewBox="0 0 16 16"><circle cx="8" cy="8" r="6.500" fill="#5a8fc8" stroke="#a9adb5" stroke-width="1.500"/><path d="M12 4L9 9 7 7z" fill="#e66"/><path d="M4 12l3-5 2 2z" fill="#fff"/></svg>
      <svg class="size-4"><use href="#ie"/></svg>
    </div>
    <svg class="mt-[14px] size-4" viewBox="0 0 16 16"><circle cx="8" cy="8.500" r="7" fill="#e8701a"/><circle cx="8.500" cy="6" r="5" fill="#2c5fb4"/><path d="M1 3q1.500.5 2 2 2-1 4 0-2 1-2 3 2 2.500 5 1-1 3-4 3 4 1 6.500-2 1-3-.5-6 4 4 2.500 8.500-3 4-8 3-5-2-5.500-8z" fill="#f59a22"/><path d="M2 10q3 5 9 4" stroke="#c8340e" fill="none"/></svg>
  </div>
  <div id="tasks" class="mt-[4px] grid h-[57px] w-[784px] shrink-0 grid-cols-[repeat(6,131px)] content-start gap-y-[6px]"></div>
  <div class="flex w-[110px] shrink-0 flex-col pl-[14px] text-[#7fb0e6]"><svg class="mt-[7px] ml-[72px] h-[6px] w-[9px]"><use href="#more"/></svg><span class="mt-[12px] text-[11px] tracking-[-0.2px]">My Computer</span></div>
  <div class="relative flex w-[103px] shrink-0 border-l border-[#0a3fa5] bg-[linear-gradient(180deg,#3cc0f8_0,#139bee_8%,#0f86e8_50%,#118fec_90%,#0d74cc_100%)]">
    <svg class="absolute top-[22px] -left-[10px] size-[19px]" viewBox="0 0 19 19"><circle cx="9.500" cy="9.500" r="8.500" fill="#1d86e4" stroke="#8ed0fb"/><path d="M11.500 5.500l-4 4 4 4" fill="none" stroke="#fff" stroke-width="2.200"/></svg>
    <div class="mt-[5px] ml-[9px] w-[17px]">
      <svg class="size-[16px]" viewBox="0 0 16 16"><circle cx="8" cy="3.500" r="3" fill="#51c95d"/><path d="M1 6h6v8H1z" fill="#d7e6d8" stroke="#2c7a38"/><path d="M2 8h4v3H2z" fill="#2aa141"/><rect x="8" y="8.500" width="7.500" height="6.500" fill="#f1c63c" stroke="#6d500a"/><path d="M10 8.500V6.500h3.500v2M11.700 11v2" stroke="#333" fill="none"/></svg>
      <svg class="mt-[2px] size-[16px]" viewBox="0 0 16 16"><path d="M6 1h8.500v7.500H6z" fill="#3f7fd8" stroke="#d8e4f2"/><path d="M2 5h8v7H2z" fill="#5ba0ec" stroke="#e4ebf4"/><path d="M3 14h6M11 11h4" stroke="#ccd6e4" stroke-width="2"/></svg>
    </div>
    <div class="mt-[6px] flex grow flex-col items-center pr-[15px] pl-[6px] leading-[19px] tracking-[-0.3px]"><span class="-mt-[4px]">12:35 AM</span><span>Saturday</span><span>8/20/2011</span></div>
  </div>
</div>

<script>
const nav = document.getElementById('nav');
const head = t => `<div class="flex h-[26px] items-center border-t border-[#a9a9a9] bg-linear-to-r from-[#c8cdd1] to-[#79868b] pb-[2px] pl-[13px] tracking-[0.05px]">${t}</div>`;
const subs = ['Content','Programs','Channels','Categories','Program Templates','Tags','Featured Items','Skins','Broadcast Monitor','Custom Program Attributes','Polycom RSS Discovery','Calendar Discovery'];
nav.innerHTML = ['System','User Management','Resources','Delivery'].map(head).join('') +
  '<div class="flex h-[26px] items-center border-t border-b border-[#a9a9a9] bg-[#f47d20] pl-[13px] text-white">Programming</div>' +
  '<div class="h-[248px] bg-white text-[11px] font-normal tracking-[-0.13px]">' +
  subs.map(s => `<div class="${s === 'Programs' ? 'bg-[#f5edee] text-[#f58232]' : 'text-[#333]'} flex h-5 items-center pt-px pl-[20px]">${s}</div>`).join('') + '</div>' +
  head('Reporting') + '<div class="h-[22px] border-t border-[#a9a9a9] bg-linear-to-r from-[#c8cdd1] to-[#79868b]"></div>';

const S = 'Super User', E = 'EGC Admin', O = 'On-Demand', L = 'Live Broadcast';
const data = [
  ['0_Live',1,L,1,S,'19 Aug 2011'],['Auto_Live_Audience_WME_Polls',1,L,6,S,'19 Aug 2011'],['Auto_VOD_FLV',1,O,4,S,'19 Aug 2011'],
  ['Auto_VOD_SWF',1,O,0,S,'19 Aug 2011'],['Auto_VOD_WMV',1,O,2,S,'19 Aug 2011'],['EGC_FLVprogram_SVP',1,O,2,E,'19 Aug 2011'],
  ['EGC_Thumbnail_program_VP',0,O,0,E,'5 Aug 2011'],['Social_Viewer_Protal_16_Aug',1,O,13,S,'16 Aug 2011'],['SVP_EGC_FLVMasterVOD',1,O,0,S,'19 Aug 2011'],
  ['SVP_EGC_FLVUploadprogram',1,O,4,E,'5 Aug 2011'],['SVP_EGC_MPEG4Uploadprogram',1,O,2,E,'5 Aug 2011'],['SVP_EGC_MPEG4Uploadprogram',0,O,0,E,'5 Aug 2011'],
  ['SVP_EGC_WMVMasterVOD',1,O,0,S,'19 Aug 2011'],['VOD_usingConfiguredURL',1,O,4,S,'11 Aug 2011']];
document.getElementById('rows').innerHTML = data.map(([n, ok, t, v, a, d], i) => `
  <div class="${i % 2 ? 'bg-[#f4f4f4]' : 'bg-white'} flex h-[22px] items-center pl-[14px]">
    <div class="size-[13px] border border-[#1c5180] bg-linear-to-br from-[#dcdcd7] to-white"></div>
    <span class="${n.startsWith('SVP') || n.startsWith('VOD') ? 'tracking-[-0.25px]' : i === 1 || i === 7 ? 'tracking-[0.14px]' : 'tracking-[-0.05px]'} mb-[2px] ml-[13px] w-[319px] font-['Noto_Sans',sans-serif] font-bold text-[#2e2e78]">${n}</span>
    <svg class="h-4 w-[17px]"><use href="${ok ? '#check' : '#deny'}"/></svg>
    <span class="ml-[44.5px] w-[103px] tracking-[-0.1px]">${t}</span><span class="w-[103px]">${v}</span><span class="w-[144px] tracking-[-0.1px]">${a}</span><span class="w-[123px]">${d}</span><span>${d}</span>
  </div>`).join('');

const tasks = [['console','C:\\WINDOWS\\...'],['eclipse','Java - file:/E:/...'],['notepad','Notepad',2],['remote','10.1.202.130 -...'],['app','Microsoft (R...',3],['ie','Qumu VCC : Liv...'],
  ['ie','Survey_auto - ...'],['ie','Qumu VCC : Liv...'],['ie','Qumu Program ...'],['ie','Qumu Program ...'],['ie','Qumu VCC : Pr...',0,1]];
document.getElementById('tasks').innerHTML = tasks.map(([icon, t, n, on]) => `
  <div class="${on ? 'bg-[#1e52b7] border-[#153f94]' : 'bg-linear-to-b from-[#5796fa] via-[#3c81f3] via-20% to-[#3a7df0] border-[#2f6adf]'} flex h-6 w-[130px] items-center rounded-[2px] border pl-[8px]">
    <svg class="size-4 shrink-0"><use href="#${icon}"/></svg>
    <span class="mb-px ml-[4px] grow whitespace-nowrap tracking-[-0.05px]">${n ? `<b class="mr-[3px] text-[#ffcf7a]">${n}</b>` : ''}${t}</span>
    ${n ? '<svg class="mr-[3px] h-[3px] w-[5px]"><use href="#caret"/></svg>' : ''}
  </div>`).join('');
</script>
</body>
</html>
